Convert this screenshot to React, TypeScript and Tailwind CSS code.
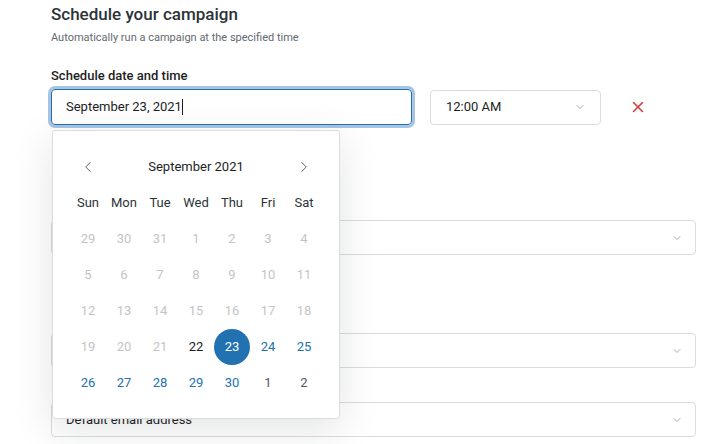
import { ChevronDown, ChevronLeft, ChevronRight, X } from "lucide-react";

const WEEKDAYS = ["Sun", "Mon", "Tue", "Wed", "Thu", "Fri", "Sat"];

// day number + state: past (disabled), today, selected, future, next (next month)
type Cell = { d: number; s: "past" | "today" | "selected" | "future" | "next" };

const WEEKS: Cell[][] = [
  [29, 30, 31, 1, 2, 3, 4].map((d) => ({ d, s: "past" as const })),
  [5, 6, 7, 8, 9, 10, 11].map((d) => ({ d, s: "past" as const })),
  [12, 13, 14, 15, 16, 17, 18].map((d) => ({ d, s: "past" as const })),
  [
    { d: 19, s: "past" },
    { d: 20, s: "past" },
    { d: 21, s: "past" },
    { d: 22, s: "today" },
    { d: 23, s: "selected" },
    { d: 24, s: "future" },
    { d: 25, s: "future" },
  ],
  [
    { d: 26, s: "future" },
    { d: 27, s: "future" },
    { d: 28, s: "future" },
    { d: 29, s: "future" },
    { d: 30, s: "future" },
    { d: 1, s: "next" },
    { d: 2, s: "next" },
  ],
];

const CELL_STYLE: Record<Cell["s"], string> = {
  past: "text-[#c3c4c7]",
  today: "text-[#1e1e1e]",
  selected: "bg-[#2271b1] text-white rounded-full",
  future: "text-[#2271b1]",
  next: "text-[#50575e]",
};

function SelectBox({ children }: { children?: React.ReactNode }) {
  return (
    <div className="h-[35px] w-full rounded-[4px] border border-[#dcdcde] bg-white flex items-center pl-[14px] pr-[12px] text-[13px] text-[#1e1e1e]">
      <span className="flex-1">{children}</span>
      <ChevronDown size={12} strokeWidth={1.5} className="text-[#8c8f94]" />
    </div>
  );
}

function Calendar() {
  return (
    <div className="absolute left-px top-[41px] w-[288px] rounded-[3px] border border-[#dcdcde] bg-white pt-[18px] pb-[17px] px-[17px] shadow-[0_10px_40px_rgba(30,40,50,0.13)]">
      <div className="grid grid-cols-7 text-[13px] [&>div]:h-[36px] [&>div]:flex [&>div]:items-center [&>div]:justify-center">
        <div className="text-[#50575e]">
          <ChevronLeft size={18} strokeWidth={1.25} />
        </div>
        <div className="col-span-5 text-[#1e1e1e]">September 2021</div>
        <div className="text-[#50575e]">
          <ChevronRight size={18} strokeWidth={1.25} />
        </div>
        {WEEKDAYS.map((w) => (
          <div key={w} className="text-[#2c3338]">
            {w}
          </div>
        ))}
        {WEEKS.flat().map((c, i) => (
          <div key={i} className={CELL_STYLE[c.s]}>
            {c.d}
          </div>
        ))}
      </div>
    </div>
  );
}

export default function App() {
  return (
    <div className="min-h-screen bg-white font-['Roboto',sans-serif] text-[#1e1e1e]">
      <div className="pl-[51px] pr-[20px] pt-[3px]">
        <h2 className="text-[17px] leading-[22px] font-medium text-[#2c3338]">
          Schedule your campaign
        </h2>
        <p className="mt-[5px] text-[11px] leading-[16px] text-[#646970]">
          Automatically run a campaign at the specified time
        </p>

        <label className="mt-[21px] block text-[13px] leading-[18px] font-medium text-[#1e1e1e]">
          Schedule date and time
        </label>
        <div className="relative mt-1 flex items-center">
          <div className="h-[36px] w-[361px] rounded-[4px] border border-[#2271b1] ring-[3px] ring-[#a7c5e3] flex items-center px-[14px] text-[13px]">
            <span>September 23, 2021</span>
            <span className="h-[16px] w-px bg-[#1e1e1e]" />
          </div>
          <div className="ml-[18px] h-[35px] w-[171px] rounded-[4px] border border-[#dcdcde] flex items-center pl-[15px] pr-[14px] text-[13px]">
            <span className="flex-1">12:00 AM</span>
            <ChevronDown size={12} strokeWidth={1.5} className="text-[#8c8f94]" />
          </div>
          <button className="ml-[28px] text-[#d63638]">
            <X size={18} strokeWidth={2} />
          </button>
          <Calendar />
        </div>

        <div className="mt-[95px] w-[645px]">
          <SelectBox />
        </div>
        <div className="mt-[78px] w-[645px]">
          <SelectBox />
        </div>
        <div className="mt-[34px] w-[645px]">
          <SelectBox>Default email address</SelectBox>
        </div>
      </div>
    </div>
  );
}
